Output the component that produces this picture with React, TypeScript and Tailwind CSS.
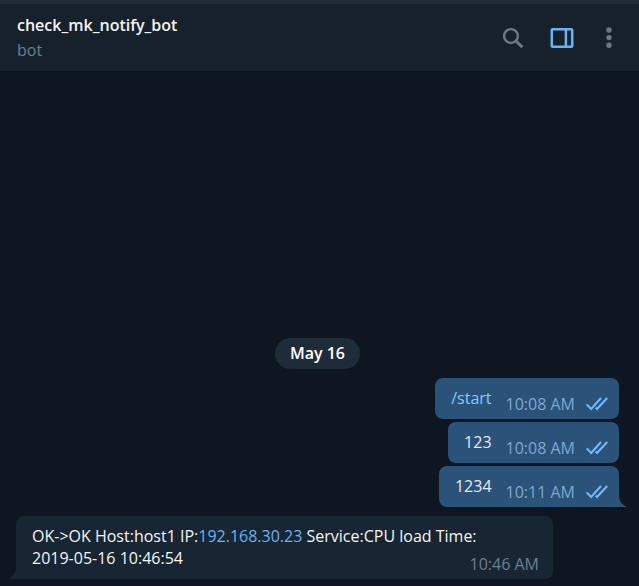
import React from "react";

type Outgoing = { text: string; time: string; command?: boolean };

const outgoing: Outgoing[] = [
  { text: "/start", time: "10:08 AM", command: true },
  { text: "123", time: "10:08 AM" },
  { text: "1234", time: "10:11 AM" },
];

function SearchIcon() {
  return (
    <svg width="22" height="22" viewBox="0 0 22 22" fill="none" stroke="currentColor" aria-hidden="true">
      <circle cx="9" cy="9" r="6.9" strokeWidth="2.4" />
      <path d="M13.8 13.8L20.3 20.3" strokeWidth="3" />
    </svg>
  );
}

function PanelIcon() {
  return (
    <svg width="24" height="22" viewBox="0 0 24 22" fill="none" stroke="currentColor" strokeWidth="2.5" aria-hidden="true">
      <rect x="1.8" y="2.2" width="20.4" height="17.6" rx="0.8" />
      <path d="M15.9 2V20" />
    </svg>
  );
}

function DotsIcon() {
  return (
    <svg width="6" height="22" viewBox="0 0 6 22" fill="currentColor" aria-hidden="true">
      <circle cx="3" cy="3" r="2.7" />
      <circle cx="3" cy="10.6" r="2.7" />
      <circle cx="3" cy="18.2" r="2.7" />
    </svg>
  );
}

function ReadTicks() {
  return (
    <svg width="22" height="14" viewBox="0 0 22 14" fill="none" stroke="currentColor" strokeWidth="2" aria-hidden="true">
      <path d="M0.7 7.4L5.2 12L15 1" />
      <path d="M9.6 10.6L11 12L21.2 1" />
    </svg>
  );
}

function OutgoingBubble({ message, last }: { message: Outgoing; last: boolean }) {
  return (
    <li
      className={`relative flex h-[41px] gap-[14px] bg-[#2b5278] pl-4 pr-[11px] ${
        last ? "rounded-l-lg rounded-tr-lg" : "rounded-lg"
      }`}
    >
      <span className={`pt-[9px] ${message.command ? "text-[#83caff]" : "text-[#e4ecf2]"}`}>{message.text}</span>
      <span className="flex items-center gap-[11px] pt-[10px] text-[#7da8d3]">
        <time>{message.time}</time>
        <span className="text-[#72bcfd]">
          <ReadTicks />
        </span>
      </span>
      {last && (
        <svg className="absolute bottom-0 left-full text-[#2b5278]" width="8" height="12" viewBox="0 0 8 12" fill="currentColor" aria-hidden="true">
          <path d="M0 0C0 6 3 9.5 7 11.2V12H0Z" />
        </svg>
      )}
    </li>
  );
}

export default function App() {
  return (
    <div className="flex min-h-screen flex-col bg-[#0e1621] font-['Open_Sans',sans-serif] text-base leading-[22px] text-[#f5f5f5]">
      <header className="flex items-center justify-between border-b border-t-4 border-b-[#0b131c] border-t-[#202b36] bg-[#17212b] pl-[17px] pr-[21px]">
        <div className="pb-2 pt-[9px]">
          <h1 className="font-semibold leading-6">check_mk_notify_bot</h1>
          <p className="leading-[26px] text-[#6d7f8f]">bot</p>
        </div>
        <nav className="flex items-center gap-[26px] text-[#707981]">
          <button type="button" aria-label="Search">
            <SearchIcon />
          </button>
          <button type="button" aria-label="Toggle side panel" className="text-[#6ab3f3]">
            <PanelIcon />
          </button>
          <button type="button" aria-label="More options" className="px-[6px]">
            <DotsIcon />
          </button>
        </nav>
      </header>

      <main className="flex grow flex-col justify-end pb-[7px] pl-4 pr-5">
        <div className="mb-[9px] self-center rounded-full bg-[#1e2c3a] px-[15px] py-1 font-semibold leading-[23px] text-white">
          May 16
        </div>
        <ul className="mb-[9px] flex flex-col items-end gap-[3px]">
          {outgoing.map((message, i) => (
            <OutgoingBubble key={message.text} message={message} last={i === outgoing.length - 1} />
          ))}
        </ul>
        <div className="relative flex w-[537px] max-w-full items-end justify-between rounded-r-lg rounded-tl-lg bg-[#182533] pl-4 pr-[14px]">
          <p className="max-w-[450px] shrink grow pb-[10px] pt-[9px]">
            OK-&gt;OK Host:host1 IP:
            <a href="#ip" className="text-[#6ab3f3]">
              192.168.30.23
            </a>{" "}
            Service:CPU load Time:
            <br />
            2019-05-16 10:46:54
          </p>
          <time className="-ml-8 shrink-0 pb-1 text-[#6d7f8f]">10:46 AM</time>
          <svg className="absolute bottom-0 right-full text-[#182533]" width="8" height="12" viewBox="0 0 8 12" fill="currentColor" aria-hidden="true">
            <path d="M8 0C8 6 5 9.5 1 11.2V12H8Z" />
          </svg>
        </div>
      </main>
    </div>
  );
}
